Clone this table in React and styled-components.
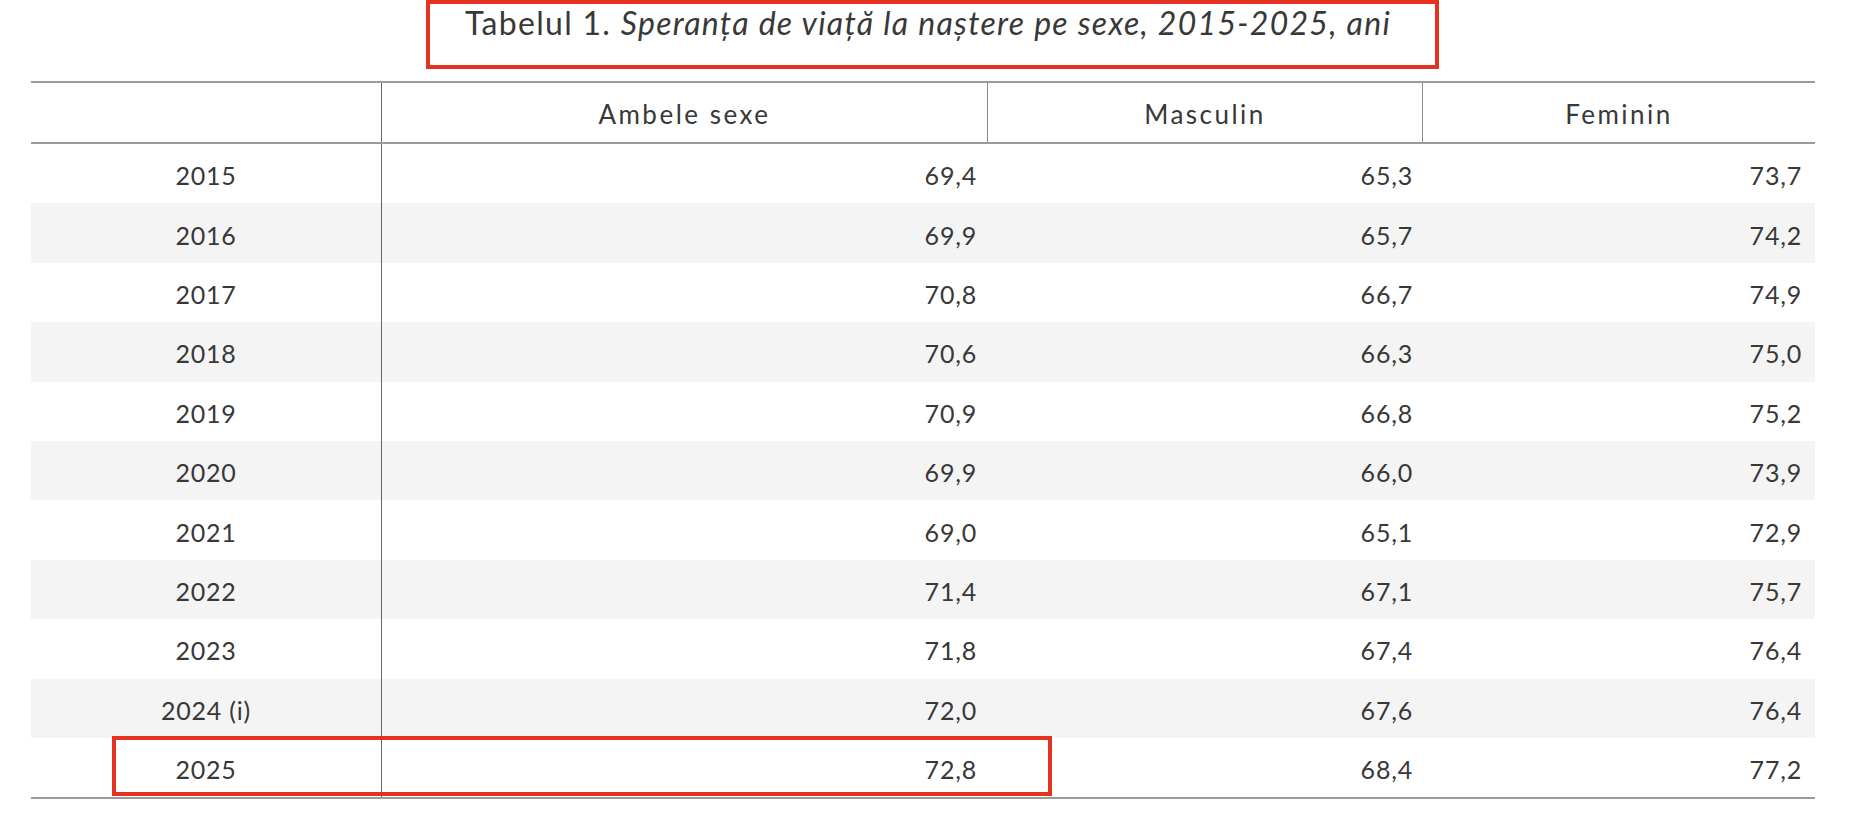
import React from "react";
import styled, { createGlobalStyle } from "styled-components";

const GlobalStyle = createGlobalStyle`
  body {
    margin: 0;
    background: #fff;
    font-family: "Lato", "Liberation Sans", sans-serif;
    color: #383838;
  }
`;

const Page = styled.div`
  width: 1784px;
  padding-left: 31px;
`;

const CaptionBox = styled.div`
  box-sizing: border-box;
  width: 1013px;
  height: 69px;
  margin-left: 395px;
  padding: 0 0 0 35px;
  border: 4px solid #e5311f;
  font-size: 32px;
  line-height: 38px;
  letter-spacing: 1.3px;
  white-space: nowrap;
  em {
    font-style: italic;
  }
`;

const Table = styled.div`
  position: relative;
  margin-top: 12px;
  border-top: 2px solid #9b9b9b;
  border-bottom: 2px solid #9b9b9b;
  font-size: 25px;
`;

const Row = styled.div`
  position: relative;
  display: grid;
  grid-template-columns: 351px 606px 435px 392px;
  height: ${(p) => (p.$head ? "59px" : "59.4px")};
  background: ${(p) => (p.$shade ? "#f4f4f4" : "#fff")};
  border-bottom: ${(p) => (p.$head ? "2px solid #9b9b9b" : "none")};
  font-size: ${(p) => (p.$head ? "26px" : "25px")};
  letter-spacing: ${(p) => (p.$head ? "2.5px" : "0.8px")};
`;

const Cell = styled.div`
  display: flex;
  align-items: center;
  justify-content: ${(p) => p.$align || "center"};
  padding: 3px ${(p) => p.$pad || 0}px 0 0;
  box-sizing: border-box;
  border-right: ${(p) => p.$line || "none"};
`;

const Mark = styled.div`
  position: absolute;
  left: 81px;
  top: -2px;
  width: 940px;
  height: 60px;
  box-sizing: border-box;
  border: 4px solid #e5311f;
  pointer-events: none;
`;

const rows = [
  ["2015", "69,4", "65,3", "73,7"],
  ["2016", "69,9", "65,7", "74,2"],
  ["2017", "70,8", "66,7", "74,9"],
  ["2018", "70,6", "66,3", "75,0"],
  ["2019", "70,9", "66,8", "75,2"],
  ["2020", "69,9", "66,0", "73,9"],
  ["2021", "69,0", "65,1", "72,9"],
  ["2022", "71,4", "67,1", "75,7"],
  ["2023", "71,8", "67,4", "76,4"],
  ["2024 (i)", "72,0", "67,6", "76,4"],
  ["2025", "72,8", "68,4", "77,2"],
];

export default function App() {
  return (
    <>
      <GlobalStyle />
      <Page>
        <CaptionBox>
          Tabelul 1. <em>Speranța de viață la naștere pe sexe, 2015-2025, ani</em>
        </CaptionBox>
        <Table>
          <Row $head>
            <Cell $line="1px solid #666" />
            <Cell $line="1px solid #8a8a8a">Ambele sexe</Cell>
            <Cell $line="1px solid #8a8a8a">Masculin</Cell>
            <Cell>Feminin</Cell>
          </Row>
          {rows.map((r, i) => (
            <Row key={r[0]} $shade={i % 2 === 1}>
              <Cell $line="1px solid #666">{r[0]}</Cell>
              <Cell $align="flex-end" $pad={11}>{r[1]}</Cell>
              <Cell $align="flex-end" $pad={10}>{r[2]}</Cell>
              <Cell $align="flex-end" $pad={13}>{r[3]}</Cell>
              {r[0] === "2025" && <Mark />}
            </Row>
          ))}
        </Table>
      </Page>
    </>
  );
}
